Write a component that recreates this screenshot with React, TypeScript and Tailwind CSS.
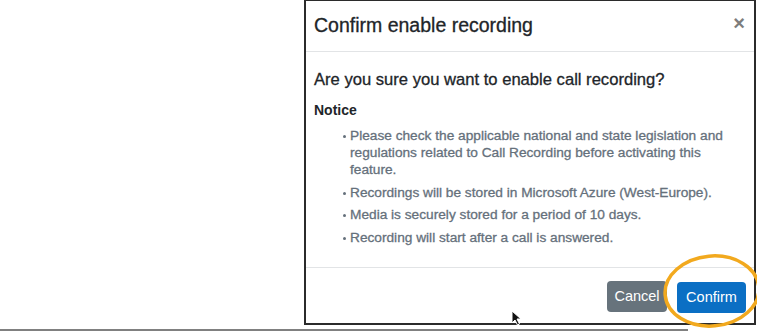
import React from "react";

const notices = [
  "Please check the applicable national and state legislation and regulations related to Call Recording before activating this feature.",
  "Recordings will be stored in Microsoft Azure (West-Europe).",
  "Media is securely stored for a period of 10 days.",
  "Recording will start after a call is answered.",
];

const App = () => {
  return (
    <div className="relative w-[757px] h-[331px] overflow-hidden bg-white font-['Liberation_Sans',Arial,sans-serif] text-[#212529]">
      <div className="ml-[304px] w-[452px] h-[325px] border-2 border-t border-[#2b2b2b] flex flex-col">
        <div className="h-[51px] shrink-0 flex items-center justify-between pl-[8px] pr-[9px] border-b border-[#e2e4e6]">
          <h1 className="text-[19.5px] [-webkit-text-stroke:0.3px_#212529]">Confirm enable recording</h1>
          <span className="text-[20px] font-bold text-[#7d7d7d] leading-none -mt-[6px]">×</span>
        </div>
        <div className="pl-[8px] pr-[12px] pt-[17px]">
          <h2 className="text-[16.6px] leading-[22px] [-webkit-text-stroke:0.3px_#212529]">
            Are you sure you want to enable call recording?
          </h2>
          <p className="mt-[11px] text-[14px] font-bold leading-[17px]">Notice</p>
          <ul className="mt-[8px] pl-[29px] flex flex-col gap-[5.5px]">
            {notices.map((n) => (
              <li key={n} className="flex gap-[4px] text-[13.7px] leading-[17px] text-[#65707b] [-webkit-text-stroke:0.3px_#65707b]">
                <span className="mt-[8px] w-[3px] h-[3px] shrink-0 rounded-full bg-[#65707b]" />
                <span>{n}</span>
              </li>
            ))}
          </ul>
        </div>
        <div className="mt-auto h-[56px] shrink-0 border-t border-[#e2e4e6] flex items-center justify-end gap-[10px] pr-[8px] pt-[4px]">
          <button className="h-[31px] w-[60px] rounded-[4px] bg-[#67737c] text-white text-[14.5px] -mt-[2px]">
            Cancel
          </button>
          <button className="h-[31px] w-[69px] rounded-[4px] bg-[#0b6fc4] text-white text-[14.5px]">
            Confirm
          </button>
        </div>
      </div>
      <div className="mt-[4px] w-[688px] h-[2px] bg-[#808080]" />

      <svg className="absolute left-[655px] top-[248px]" width="110" height="86" viewBox="0 0 110 86">
        <ellipse cx="57" cy="43" rx="47" ry="35" fill="none" stroke="#f2a91e" strokeWidth="3.5" transform="rotate(-5 57 43)" />
      </svg>

      <svg className="absolute left-[511px] top-[310px]" width="12" height="16" viewBox="0 0 12 16">
        <path d="M1 1 L1 13 L4 10 L6.5 15 L8.5 14 L6 9 L10 9 Z" fill="#111" stroke="#fff" strokeWidth="1" />
      </svg>
    </div>
  );
};

export default App;
